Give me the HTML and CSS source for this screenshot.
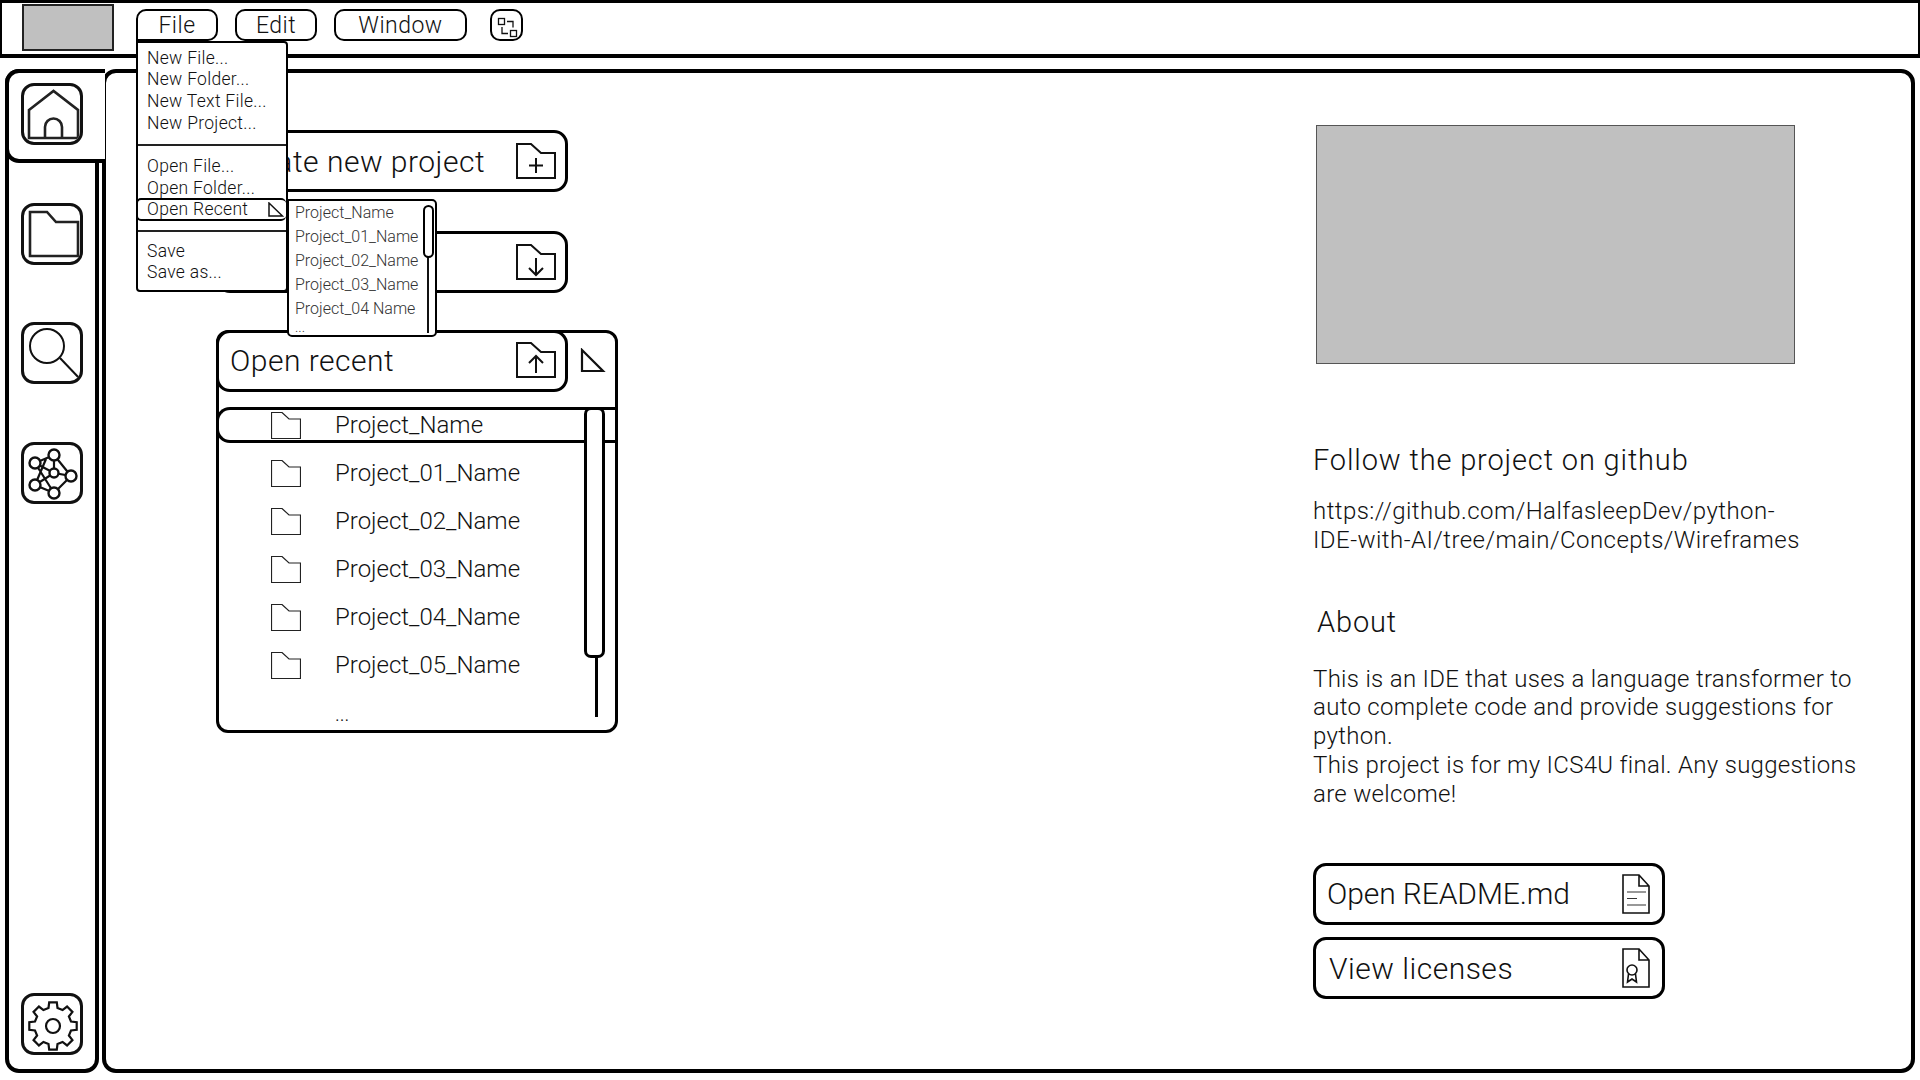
FILE: index.html
```html
<!DOCTYPE html>
<html lang="en">
  <head>
    <meta charset="UTF-8" />
    <title>Python IDE wireframe</title>
    <link rel="stylesheet" href="styles.css">
  </head>

  <body>
    <svg class="defs" width="0" height="0">
      <symbol id="folder" viewBox="0 0 30 27">
        <path d="M0.5 0.5 H11 L18 7 H29.5 V26.5 H0.5 Z" fill="#fff" stroke="#222" stroke-width="1.2" />
      </symbol>
      <symbol id="bigfolder" viewBox="0 0 40 36">
        <path d="M1 1 H15 L25 10 H39 V35 H1 Z" fill="none" stroke="#111" stroke-width="2" />
      </symbol>
    </svg>

    <header class="topbar">
      <div class="logo"></div>
      <div class="menu-wrap">
        <button class="menu-btn file-btn">File</button>
        <!-- dropdown -->
        <div class="dropdown">
          <div class="dd-item">New File...</div>
          <div class="dd-item">New Folder...</div>
          <div class="dd-item">New Text File...</div>
          <div class="dd-item">New Project...</div>
          <div class="dd-sep first-sep"></div>
          <div class="dd-item">Open File...</div>
          <div class="dd-item">Open Folder...</div>
          <div class="dd-row">
            <span>Open Recent</span>
            <svg class="dd-tri" width="16" height="15" viewBox="0 0 16 15">
              <path d="M1 1 L14.5 14 H1 Z" fill="none" stroke="#111" stroke-width="1.5" />
            </svg>
          </div>
          <div class="dd-sep second-sep"></div>
          <div class="dd-item">Save</div>
          <div class="dd-item">Save as...</div>
          <div class="submenu">
            <div class="sub-item">Project_Name</div>
            <div class="sub-item">Project_01_Name</div>
            <div class="sub-item">Project_02_Name</div>
            <div class="sub-item">Project_03_Name</div>
            <div class="sub-item">Project_04 Name</div>
            <div class="sub-more">...</div>
            <div class="sub-track"></div>
            <div class="sub-thumb"></div>
          </div>
        </div>
      </div>
      <button class="menu-btn edit-btn">Edit</button>
      <button class="menu-btn window-btn">Window</button>
      <button class="menu-btn layout-btn">
        <svg width="31" height="32" viewBox="0 0 31 32">
          <rect x="6.5" y="7.5" width="6" height="6" fill="none" stroke="#111" stroke-width="1.3" />
          <rect x="18.5" y="19.5" width="6" height="6" fill="none" stroke="#111" stroke-width="1.3" />
          <path d="M15 10.5 H21 V16.5 M10 16 V22.5 H16" fill="none" stroke="#111" stroke-width="1.3" />
        </svg>
      </button>
    </header>

    <div class="workspace">
      <nav class="sidebar">
        <div class="home-tab"></div>
        <button class="side-btn">
          <svg width="58" height="58" viewBox="0 0 58 58">
            <path d="M5 24 L29.5 5 L54 24 V52 H5 Z" fill="none" stroke="#222" stroke-width="2.6" />
            <path d="M21 52 V41 A8.5 8.5 0 0 1 38 41 V52" fill="none" stroke="#222" stroke-width="2.6" />
          </svg>
        </button>
        <button class="side-btn">
          <svg width="58" height="58" viewBox="0 0 58 58">
            <path d="M6 6 H23 L32 16 H54 V50 H6 Z" fill="none" stroke="#222" stroke-width="2.6" />
          </svg>
        </button>
        <button class="side-btn">
          <svg width="58" height="58" viewBox="0 0 58 58">
            <circle cx="23" cy="21" r="17" fill="none" stroke="#111" stroke-width="2" />
            <path d="M36 33 L56 54" fill="none" stroke="#111" stroke-width="2" />
          </svg>
        </button>
        <button class="side-btn">
          <svg width="58" height="58" viewBox="0 0 58 58">
            <path d="M30 10 L11 18 L30 28 L47 31 L30 48 L11 40 L30 28 M30 10 L47 31 M11 18 L30 48 M30 10 L30 28 M11 40 L22 14" fill="none" stroke="#111" stroke-width="2.2" />
            <g fill="#fff" stroke="#111" stroke-width="2.4">
              <circle cx="30" cy="10" r="5.5" />
              <circle cx="11" cy="18" r="5.5" />
              <circle cx="30" cy="28" r="4.5" />
              <circle cx="47" cy="31" r="5.5" />
              <circle cx="11" cy="40" r="5.5" />
              <circle cx="30" cy="48" r="5.5" />
            </g>
          </svg>
        </button>
        <button class="side-btn gear-btn">
          <svg width="58" height="58" viewBox="0 0 58 58">
            <g transform="translate(29 30)" fill="none" stroke="#111" stroke-width="2.2">
              <polygon points="-4.5,-18 -3.8,-23.7 3.8,-23.7 4.5,-18 9.55,-15.9 14.07,-19.45 19.45,-14.07 15.9,-9.55 18,-4.5 23.7,-3.8 23.7,3.8 18,4.5 15.9,9.55 19.45,14.07 14.07,19.45 9.55,15.9 4.5,18 3.8,23.7 -3.8,23.7 -4.5,18 -9.55,15.9 -14.07,19.45 -19.45,14.07 -15.9,9.55 -18,4.5 -23.7,3.8 -23.7,-3.8 -18,-4.5 -15.9,-9.55 -19.45,-14.07 -14.07,-19.45 -9.55,-15.9" />
              <circle r="7" />
            </g>
          </svg>
        </button>
      </nav>

      <main class="main">
        <section class="actions">
          <div class="big-btn">
            <span>Create new project</span>
            <svg width="40" height="36" viewBox="0 0 40 36">
              <use href="#bigfolder" />
              <path d="M20 15 V30 M13 22.5 H27" stroke="#111" stroke-width="2" />
            </svg>
          </div>
          <div class="big-btn">
            <span>Open project</span>
            <svg width="40" height="36" viewBox="0 0 40 36">
              <use href="#bigfolder" />
              <path d="M20 14 V31 M13 24 L20 31 L27 24" fill="none" stroke="#111" stroke-width="2" />
            </svg>
          </div>
          <div class="recent">
            <div class="recent-head">
              <div class="big-btn">
                <span>Open recent</span>
                <svg width="40" height="36" viewBox="0 0 40 36">
                  <use href="#bigfolder" />
                  <path d="M20 31 V14 M13 21 L20 14 L27 21" fill="none" stroke="#111" stroke-width="2" />
                </svg>
              </div>
              <svg class="recent-tri" width="26" height="26" viewBox="0 0 26 26">
                <path d="M2 2 L23 23 H2 Z" fill="none" stroke="#111" stroke-width="2.2" />
              </svg>
            </div>
            <ul class="recent-list">
              <li class="recent-row selected"><svg width="30" height="27"><use href="#folder" /></svg>Project_Name</li>
              <li class="recent-row"><svg width="30" height="27"><use href="#folder" /></svg>Project_01_Name</li>
              <li class="recent-row"><svg width="30" height="27"><use href="#folder" /></svg>Project_02_Name</li>
              <li class="recent-row"><svg width="30" height="27"><use href="#folder" /></svg>Project_03_Name</li>
              <li class="recent-row"><svg width="30" height="27"><use href="#folder" /></svg>Project_04_Name</li>
              <li class="recent-row"><svg width="30" height="27"><use href="#folder" /></svg>Project_05_Name</li>
              <li class="recent-more">...</li>
            </ul>
            <div class="recent-track"></div>
            <div class="recent-thumb"></div>
          </div>
        </section>

        <aside class="info">
          <div class="preview"></div>
          <h2 class="follow-title">Follow the project on github</h2>
          <p class="link-text">https://github.com/HalfasleepDev/python-<br>IDE-with-AI/tree/main/Concepts/Wireframes</p>
          <h2 class="about-title">About</h2>
          <p class="about-text">This is an IDE that uses a language transformer to<br>auto complete code and provide suggestions for<br>python.<br>This project is for my ICS4U final. Any suggestions<br>are welcome!</p>
          <div class="doc-btn first-doc">
            <span class="readme">Open README.md</span>
            <svg width="28" height="40" viewBox="0 0 28 40">
              <path d="M1 1 H17 L27 12 V39 H1 Z M17 1 V12 H27" fill="none" stroke="#111" stroke-width="1.6" />
              <path d="M5 18 H24 M5 24.5 H15 M5 31 H24" stroke="#333" stroke-width="1.2" />
            </svg>
          </div>
          <div class="doc-btn">
            <span class="licenses">View licenses</span>
            <svg width="28" height="40" viewBox="0 0 28 40">
              <path d="M1 1 H17 L27 12 V39 H1 Z M17 1 V12 H27" fill="none" stroke="#111" stroke-width="1.6" />
              <circle cx="10" cy="22" r="5" fill="none" stroke="#111" stroke-width="1.6" />
              <path d="M6.5 26 L5.5 34 L10 31 L14.5 34 L13.5 26" fill="none" stroke="#111" stroke-width="1.6" />
            </svg>
          </div>
        </aside>
      </main>
    </div>
  </body>
</html>
```

FILE: styles.css
```css
* {
  box-sizing: border-box;
}

html,
body {
  margin: 0;
  height: 1080px;
  overflow: hidden;
  background: #fff;
}

body {
  font-family: Roboto, "Liberation Sans", sans-serif;
  font-weight: 300;
  color: #111;
}

.defs {
  position: absolute;
}

button {
  font: inherit;
  color: inherit;
  background: #fff;
  padding: 0;
}

/* top bar */
.topbar {
  display: flex;
  align-items: flex-start;
  height: 58px;
  padding: 1px 0 0 20px;
  border: 3px solid #000;
  border-bottom-width: 4px;
  border-left-width: 2px;
  border-right-width: 2px;
}

.logo {
  width: 92px;
  height: 47px;
  background: #c0c0c0;
  border: 2px solid #222;
  margin-right: 22px;
}

.menu-wrap {
  position: relative;
  margin: 5px 17px 0 0;
}

.menu-btn {
  display: block;
  height: 32px;
  border: 2px solid #000;
  border-radius: 10px;
  font-size: 23px;
  letter-spacing: 0.5px;
}

.file-btn {
  width: 82px;
  border-bottom-left-radius: 0;
}

.edit-btn {
  width: 82px;
  margin: 5px 17px 0 0;
}

.window-btn {
  width: 133px;
  margin: 5px 23px 0 0;
}

.layout-btn {
  width: 33px;
  margin-top: 5px;
  overflow: hidden;
}

.layout-btn svg {
  display: block;
}

/* file dropdown */
.dropdown {
  position: absolute;
  top: 32px;
  left: 0;
  z-index: 10;
  width: 152px;
  height: 251px;
  padding-top: 4.5px;
  background: #fff;
  border: 2px solid #000;
  border-radius: 0 4px 4px 4px;
  font-size: 17.5px;
  letter-spacing: 0.3px;
}

.dd-item {
  height: 21.7px;
  line-height: 21.7px;
  padding-left: 9px;
  white-space: nowrap;
}

.dd-sep {
  margin: 10px 0;
  border-top: 2px solid #222;
}

.second-sep {
  margin: 9px 0 9px;
}

.dd-row {
  display: flex;
  align-items: center;
  justify-content: space-between;
  height: 23px;
  margin: -2px 0 0 -2px;
  padding: 0 2px 0 9px;
  border: 2px solid #000;
  border-right: 0;
  border-radius: 5px;
}

/* recent submenu */
.submenu {
  position: absolute;
  top: 156px;
  left: 149px;
  width: 150px;
  height: 138px;
  padding: 0 0 0 6px;
  background: #fff;
  border: 2px solid #000;
  border-radius: 0 5px 5px 5px;
  font-size: 16px;
  letter-spacing: 0;
  color: #333;
}

.sub-item {
  height: 24px;
  line-height: 24px;
  white-space: nowrap;
}

.sub-more {
  line-height: 12px;
  font-size: 14px;
}

.sub-track {
  position: absolute;
  top: 50px;
  left: 138px;
  width: 2px;
  height: 82px;
  background: #111;
}

.sub-thumb {
  position: absolute;
  top: 4px;
  left: 134px;
  width: 11px;
  height: 53px;
  background: #fff;
  border: 2px solid #000;
  border-radius: 6px;
}

/* workspace */
.workspace {
  display: flex;
  gap: 3px;
  height: 1004px;
  margin: 11px 5px 0 5px;
}

.sidebar {
  position: relative;
  display: flex;
  flex-direction: column;
  gap: 57.5px;
  width: 94px;
  padding: 10px 0 14px 12px;
  border: 4px solid #000;
  border-radius: 14px;
}

.home-tab {
  position: absolute;
  top: -4px;
  left: -4px;
  z-index: 2;
  width: 100px;
  height: 94px;
  background: #fff;
  border: 4px solid #000;
  border-right: 0;
  border-radius: 14px 0 0 14px;
}

.side-btn {
  position: relative;
  z-index: 3;
  width: 62px;
  height: 62px;
  border: 3px solid #111;
  border-radius: 13px;
  background: transparent;
  overflow: hidden;
}

.side-btn svg {
  display: block;
}

.gear-btn {
  margin-top: auto;
}

.main {
  flex: 1;
  display: flex;
  justify-content: space-between;
  padding: 57px 0 0 110px;
  border: 4px solid #000;
  border-radius: 14px;
}

/* left column */
.actions {
  display: flex;
  flex-direction: column;
  align-items: flex-start;
  gap: 39px;
}

.big-btn {
  display: flex;
  align-items: center;
  justify-content: space-between;
  width: 352px;
  height: 62px;
  padding: 0 9px 0 11px;
  background: #fff;
  border: 3px solid #000;
  border-radius: 14px;
  font-size: 30px;
  letter-spacing: 0.5px;
}

.big-btn svg {
  margin-bottom: 1px;
}

.recent {
  position: relative;
  width: 402px;
  height: 403px;
  margin-top: -2px;
  border: 3px solid #000;
  border-radius: 12px;
  background: #fff;
}

.recent-head {
  display: flex;
  align-items: center;
  gap: 12px;
  margin: -3px 0 0 -3px;
  height: 62px;
}

.recent-head .big-btn {
  padding-bottom: 2px;
}

.recent-list {
  list-style: none;
  margin: 15px 0 0 0;
  padding: 0;
  font-size: 24px;
}

.recent-row {
  display: flex;
  align-items: center;
  gap: 34px;
  height: 48px;
  padding-left: 52px;
  white-space: nowrap;
}

.recent-row svg {
  flex: none;
}

.recent-row.selected {
  height: 36px;
  margin: 0 0 6px -3px;
  border: 3px solid #000;
  border-right: 0;
  border-radius: 14px 0 0 14px;
}

.recent-more {
  padding: 18px 0 0 116px;
  font-size: 20px;
  line-height: 14px;
}

.recent-track {
  position: absolute;
  top: 301px;
  left: 376px;
  width: 3px;
  height: 83px;
  background: #000;
}

.recent-thumb {
  position: absolute;
  top: 74px;
  left: 365px;
  width: 21px;
  height: 251px;
  background: #fff;
  border: 3px solid #000;
  border-radius: 7px;
}

/* right column */
.info {
  width: 598px;
}

.preview {
  width: 479px;
  height: 239px;
  margin: -5px 0 0 3px;
  background: #c0c0c0;
  border: 1.5px solid #555;
}

.follow-title,
.about-title {
  margin: 0;
  font-size: 29px;
  font-weight: 300;
  line-height: 36px;
  letter-spacing: 0.85px;
}

.follow-title {
  margin-top: 78px;
}

.about-title {
  margin: 49px 0 0 4px;
}

.link-text,
.about-text {
  margin: 0;
  font-size: 24px;
  line-height: 28.8px;
  white-space: nowrap;
}

.link-text {
  margin-top: 19px;
  letter-spacing: 0.45px;
}

.about-text {
  margin-top: 25px;
  letter-spacing: 0.3px;
}

.doc-btn {
  display: flex;
  align-items: center;
  justify-content: space-between;
  width: 352px;
  height: 62px;
  margin-top: 12px;
  padding: 0 12px 0 11px;
  border: 3px solid #000;
  border-radius: 13px;
  font-size: 30px;
  letter-spacing: 0.5px;
}

.first-doc {
  margin-top: 54px;
}

.readme {
  letter-spacing: -0.1px;
}

.licenses {
  padding: 2px 0 0 2px;
}
```
